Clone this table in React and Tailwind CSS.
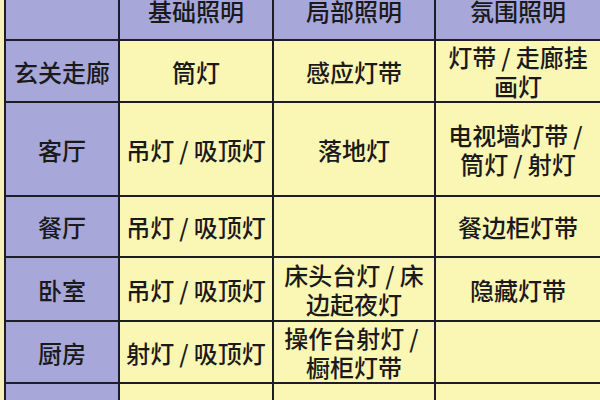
const header = ['', '基础照明', '局部照明', '氛围照明']

const rows = [
  ['玄关走廊', ['筒灯'], ['感应灯带'], ['灯带/走廊挂', '画灯']],
  ['客厅', ['吊灯/吸顶灯'], ['落地灯'], ['电视墙灯带/', '筒灯/射灯']],
  ['餐厅', ['吊灯/吸顶灯'], [], ['餐边柜灯带']],
  ['卧室', ['吊灯/吸顶灯'], ['床头台灯/床', '边起夜灯'], ['隐藏灯带']],
  ['厨房', ['射灯/吸顶灯'], ['操作台射灯/', '橱柜灯带'], []],
  ['', [], [], []],
]

// the slash in the source table sits with some air around it
function Line({ text }) {
  const parts = text.split('/')
  return (
    <span className="whitespace-nowrap">
      {parts.map((p, i) => (
        <span key={i}>
          {i > 0 && <span className="mx-[5px]">/</span>}
          {p}
        </span>
      ))}
    </span>
  )
}

function Cell({ lines, purple }) {
  return (
    <div
      className={`flex flex-col items-center justify-center text-center leading-[29px] ${
        purple ? 'bg-[#a7a7d9]' : 'bg-[#faf6b4]'
      }`}
    >
      {lines.map((l, i) => (
        <Line key={i} text={l} />
      ))}
    </div>
  )
}

export default function App() {
  return (
    <div className="w-[600px] h-[400px] overflow-hidden bg-[#faf6b4]">
      <div
        className="-mt-[19px] grid grid-cols-[4px_112px_152px_160px_164px] grid-rows-[58px_60px_92px_59px_62px_60px_60px] gap-[2px] bg-[#1d1d28] text-[24px] font-medium text-[#1a1a1a]"
        style={{ fontFamily: '"Noto Sans CJK SC", "Noto Sans", sans-serif' }}
      >
        <div className="row-span-7 bg-[#f6f2b6]" />
        {header.map((h, i) => (
          <Cell key={i} lines={h ? [h] : []} purple />
        ))}
        {rows.map((r, ri) => (
          <div key={ri} className="contents">
            <Cell lines={r[0] ? [r[0]] : []} purple />
            <Cell lines={r[1]} />
            <Cell lines={r[2]} />
            <Cell lines={r[3]} />
          </div>
        ))}
      </div>
    </div>
  )
}
